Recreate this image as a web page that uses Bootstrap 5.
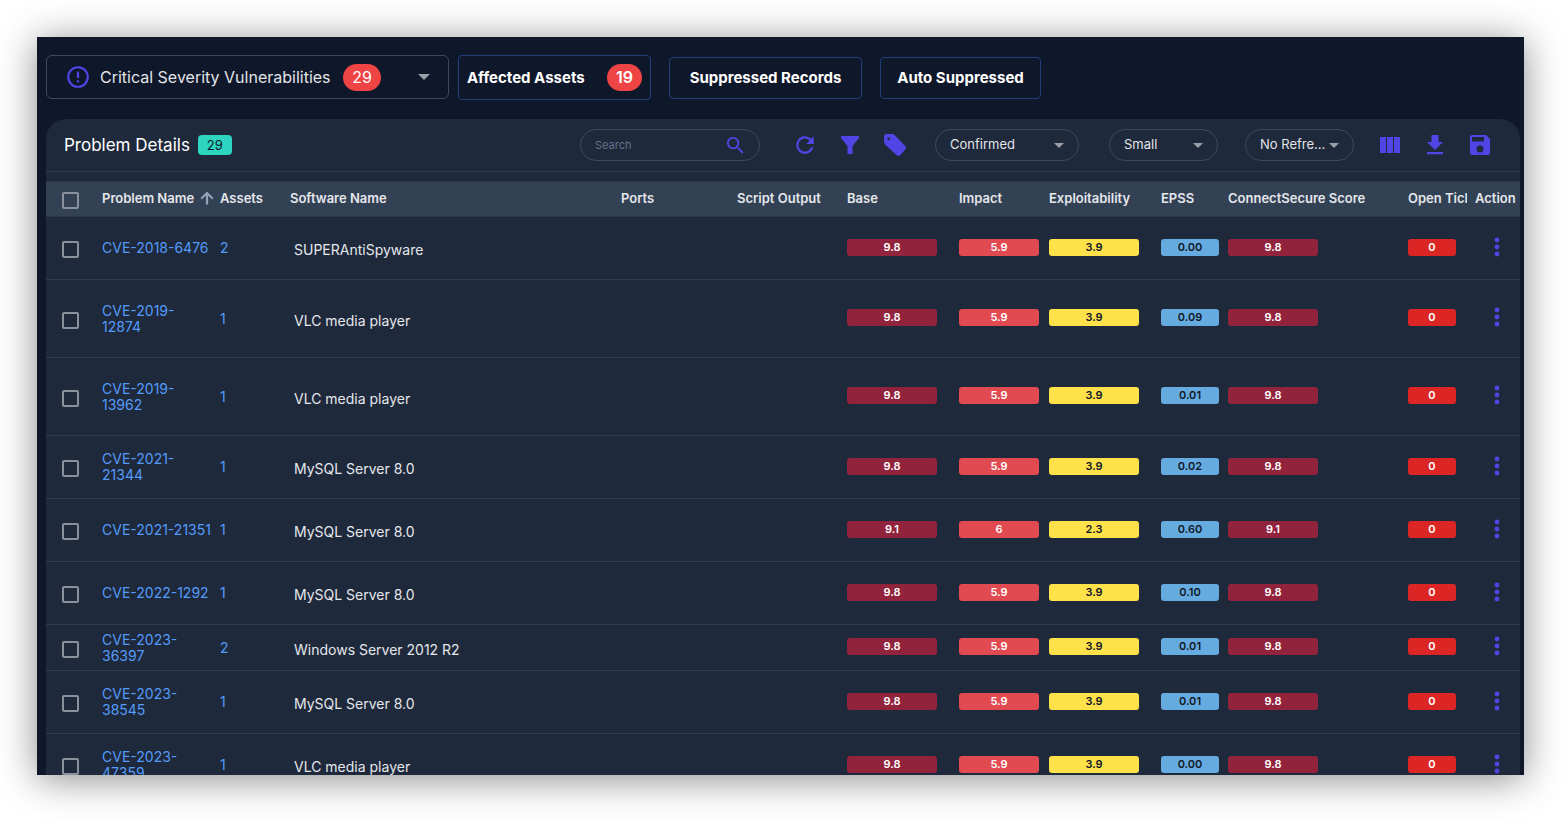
<!DOCTYPE html>
<html lang="en">
<head>
<meta charset="utf-8">
<meta name="viewport" content="width=device-width, initial-scale=1">
<title>Problem Details</title>
<link href="https://cdn.jsdelivr.net/npm/bootstrap@5.3.0/dist/css/bootstrap.min.css" rel="stylesheet">
<style>
  :root { --accent: #4f46e5; --ink: #0f172a; --panel: #1e293b; --line: #2d3b4e; --edge: #3c4a5e; }
  body { font-family: Inter, "Liberation Sans", sans-serif; background: #fff; height: 100vh; padding: 37px 44px 44px 37px; }
  .window { background: var(--ink); box-shadow: 0 4px 36px rgba(0,0,0,.46); padding: 18px 4px 0 9px; }
  svg { display: block; fill: currentColor; }
  select, .search-box input { appearance: none; background: transparent; border: 0; outline: 0; color: #e2e4e8; }
  select { background: url("data:image/svg+xml,%3Csvg xmlns='http://www.w3.org/2000/svg' viewBox='0 0 10 5'%3E%3Cpath d='M0 0h10L5 5z' fill='%239a9ea6'/%3E%3C/svg%3E") no-repeat right 14px center / 10px 5px; }
  option { background: var(--panel); }

  .severity { width: 403px; height: 44px; border: 1px solid var(--edge); border-radius: 6px; color: var(--accent); }
  .severity svg { left: 18px; pointer-events: none; }
  .severity select { font-size: 16px; padding-left: 53px; background-size: 12px 6px; background-position: right 18px center; }
  .count-pill { background: #ef4444; color: #fff; font-size: 16px; line-height: 27px; height: 27px; border-radius: 14px; text-align: center; }
  .severity .count-pill { width: 38px; left: 296px; top: 8px; pointer-events: none; }
  .tabs { margin-left: 9px; gap: 18px; }
  .tab-btn { --bs-btn-color: #fff; --bs-btn-border-color: #1e3f7a; --bs-btn-hover-color: #fff; --bs-btn-hover-border-color: #3b62a8; --bs-btn-border-radius: 4px;
    --bs-btn-font-size: 15px; --bs-btn-font-weight: 700; --bs-btn-line-height: 24px; height: 42px; }
  .tab-assets { width: 193px; height: 45px; padding: 0 8px; }
  .tab-assets .count-pill { width: 35px; }
  .tab-records { width: 193px; }
  .tab-auto { width: 161px; }

  .panel { background: var(--panel); border-radius: 20px 20px 0 0; margin-top: 19px; }
  .toolbar { height: 53px; padding: 0 28px 0 18px; border-bottom: 1px solid var(--line); margin-bottom: 9px; }
  .toolbar h1 { font-size: 17px; font-weight: 400; color: #fff; }
  .total { background: #2dd4bf; color: #0f172a; font-size: 13px; line-height: 20px; width: 34px; border-radius: 4px; text-align: center; }
  .search-box { width: 180px; height: 32px; border: 1px solid var(--edge); border-radius: 16px; padding: 0 14px; color: var(--accent); }
  .search-box input { font-size: 11px; }
  .search-box input::placeholder { color: #64748b; opacity: 1; }
  .pill-select { height: 32px; border: 1px solid var(--edge); border-radius: 16px; font-size: 13px; padding: 0 22px 0 14px; text-overflow: ellipsis; }
  .icon-btn { background: none; border: 0; padding: 0; color: var(--accent); }
  .tools { gap: 21px; }
  .quick { margin: 0 28px 0 33px; }
  .status { width: 144px; }
  .density { width: 109px; margin: 0 27px 0 30px; }
  .interval { width: 109px; }

  .grid { table-layout: fixed; width: 100%; }
  .grid col { width: 112px; }
  .grid th { background: #334155; color: #e5e7eb; font-size: 13px; font-weight: 600; height: 35px; line-height: 18px; padding: 0 0 2px; white-space: nowrap; border-top: 1px solid #2a384b; border-bottom: 1px solid #2a384b; }
  .grid td { height: 63px; padding: 0; vertical-align: middle; border-bottom: 1px solid var(--line); font-size: 14px; line-height: 16px; }
  .grid .roomy td { height: 78px; }
  .grid .tight td { height: 46px; }
  .grid .pick { padding: 3px 0 0 16px; }
  .grid .software { padding: 4px 0 0 4px; color: #e5e7eb; }
  .grid a { color: #559bfa; text-decoration: none; }
  .grid .pick input { appearance: none; display: block; width: 17px; height: 17px; border: 2px solid #8a919d; border-radius: 2px; }
  .grid .pick input:checked { background: var(--accent); }
  .sort-arrow { fill: #94a3b8; }
  .score { height: 17px; line-height: 16px; border-radius: 3px; font-size: 11px; font-weight: 600; text-align: center; color: #fff; margin-bottom: 2px; }
  .s-high { background: #92233d; width: 90px; }
  .s-impact { background: #e04a50; width: 80px; }
  .s-expl { background: #ffe14a; width: 90px; color: #111827; }
  .s-epss { background: #66abe0; width: 58px; color: #111827; }
  .s-open { background: #dc2626; width: 48px; }
  .more { width: 24px; margin-left: 18px; }
</style>
</head>
<body class="d-flex m-0 overflow-hidden">
<main class="window flex-fill overflow-hidden">
  <div class="d-flex">
    <div class="severity position-relative">
      <svg class="position-absolute top-50 translate-middle-y" width="26" height="26" viewBox="0 0 24 24" aria-hidden="true"><path d="M11 15h2v2h-2zm0-8h2v6h-2zm1-5a10 10 0 1 0 0 20 10 10 0 0 0 0-20zm0 18a8 8 0 1 1 0-16 8 8 0 0 1 0 16z"/></svg>
      <select class="w-100 h-100" aria-label="Severity"><option>Critical Severity Vulnerabilities</option></select>
      <span class="count-pill position-absolute">29</span>
    </div>
    <div class="tabs d-flex align-items-center">
      <button type="button" class="btn tab-btn tab-assets d-flex align-items-center justify-content-between">Affected Assets <span class="count-pill fw-semibold">19</span></button>
      <button type="button" class="btn tab-btn tab-records p-0">Suppressed Records</button>
      <button type="button" class="btn tab-btn tab-auto p-0">Auto Suppressed</button>
    </div>
  </div>

  <section class="panel overflow-hidden">
    <div class="toolbar d-flex align-items-center">
      <h1 class="m-0">Problem Details</h1>
      <span class="total ms-2">29</span>
      <label class="search-box d-flex align-items-center ms-auto">
        <input class="flex-fill w-100 p-0" type="text" placeholder="Search" aria-label="Search">
        <svg class="flex-shrink-0" width="20" height="20" viewBox="1 1 21 21" aria-hidden="true"><path d="M15.500 14h-.79l-.28-.27A6.470 6.470 0 0 0 16 9.500 6.500 6.500 0 1 0 9.500 16c1.610 0 3.090-.59 4.230-1.570l.27.28v.79l5 4.990L20.490 19l-4.990-5zm-6 0a4.500 4.500 0 1 1 0-9 4.500 4.500 0 0 1 0 9z"/></svg>
      </label>
      <div class="tools quick d-flex">
        <button class="icon-btn" type="button" aria-label="Refresh"><svg width="24" height="24" viewBox="1 1 22 22"><path d="M17.650 6.350A8 8 0 1 0 19.730 14h-2.080A6 6 0 1 1 12 6c1.660 0 3.140.69 4.220 1.780L13 11h7V4z"/></svg></button>
        <button class="icon-btn" type="button" aria-label="Filter"><svg width="24" height="24" viewBox="0 0 24 24"><path d="M3 3h18v2l-6.500 8v8h-5v-8L3 5z"/></svg></button>
        <button class="icon-btn" type="button" aria-label="Tag"><svg width="24" height="24" viewBox="0 0 24 24"><path fill-rule="evenodd" d="M3.500 1h5.500c1 0 1.900.4 2.600 1.100l10.500 10.700c1.100 1.100 1.200 2.500.2 3.600l-5 5.700c-1 1.100-2.500 1.100-3.600.1L2.500 12C1.500 11 1 9.900 1 8.600V3.500C1 2.100 2.100 1 3.500 1zm2.200 3.400a1.400 1.400 0 1 0 0 2.800 1.400 1.400 0 0 0 0-2.800z"/></svg></button>
      </div>
      <select class="pill-select status" aria-label="Status"><option>Confirmed</option></select>
      <select class="pill-select density" aria-label="Density"><option>Small</option></select>
      <select class="pill-select interval" aria-label="Refresh interval"><option>No Refre...</option></select>
      <div class="tools d-flex ms-4">
        <button class="icon-btn" type="button" aria-label="Columns"><svg width="24" height="24" viewBox="0 0 24 24"><path d="M2 4h6v16H2zm7 0h6v16H9zm7 0h6v16h-6z"/></svg></button>
        <button class="icon-btn" type="button" aria-label="Download"><svg width="24" height="24" viewBox="0 0 24 24"><path d="M20 9h-4.500V2h-7v7H4l8 8zM4 19v2.300h16V19z"/></svg></button>
        <button class="icon-btn" type="button" aria-label="Save"><svg width="24" height="24" viewBox="0 0 24 24"><path d="M18 2H4a2 2 0 0 0-2 2v16c0 1.100.9 2 2 2h16a2 2 0 0 0 2-2V6zm-6 17.500a3.500 3.500 0 1 1 0-7 3.500 3.500 0 0 1 0 7zM16 8.500H4V4h12z"/></svg></button>
      </div>
    </div>

    <table class="grid">
      <colgroup><col style="width:56px"><col style="width:118px"><col style="width:70px"><col style="width:auto"><col style="width:116px"><col style="width:110px"><col><col style="width:90px"><col><col style="width:67px"><col style="width:180px"><col style="width:59px"><col style="width:53px"></colgroup>
      <thead><tr>
        <th class="pick"><input type="checkbox" aria-label="Select all"></th>
        <th><span class="d-flex align-items-center">Problem Name
          <svg class="sort-arrow ms-1" width="18" height="18" viewBox="1 1 22 22" aria-hidden="true"><path d="M4 12l1.700 1.700L10.600 8.800V20h2.800V8.800l4.900 4.900L20 12l-8-8z"/></svg></span></th>
        <th>Assets</th><th>Software Name</th><th>Ports</th><th>Script Output</th><th>Base</th><th>Impact</th><th>Exploitability</th><th>EPSS</th><th>ConnectSecure Score</th><th class="overflow-hidden">Open Tick</th><th class="ps-2">Action</th>
      </tr></thead>
      <tbody id="problems"></tbody>
    </table>
  </section>
</main>

<script src="https://cdn.jsdelivr.net/npm/bootstrap@5.3.0/dist/js/bootstrap.bundle.min.js"></script>
<script>
  // name, assets, software, base, impact, exploitability, EPSS, row height class
  const problems = [
    ["CVE-2018-6476", 2, "SUPERAntiSpyware", "9.8", "5.9", "3.9", "0.00", ""],
    ["CVE-2019-12874", 1, "VLC media player", "9.8", "5.9", "3.9", "0.09", "roomy"],
    ["CVE-2019-13962", 1, "VLC media player", "9.8", "5.9", "3.9", "0.01", "roomy"],
    ["CVE-2021-21344", 1, "MySQL Server 8.0", "9.8", "5.9", "3.9", "0.02", ""],
    ["CVE-2021-21351", 1, "MySQL Server 8.0", "9.1", "6", "2.3", "0.60", ""],
    ["CVE-2022-1292", 1, "MySQL Server 8.0", "9.8", "5.9", "3.9", "0.10", ""],
    ["CVE-2023-36397", 2, "Windows Server 2012 R2", "9.8", "5.9", "3.9", "0.01", "tight"],
    ["CVE-2023-38545", 1, "MySQL Server 8.0", "9.8", "5.9", "3.9", "0.01", ""],
    ["CVE-2023-47359", 1, "VLC media player", "9.8", "5.9", "3.9", "0.00", ""]
  ];
  const score = (kind, value) => `<td><div class="score s-${kind}">${value}</div></td>`;
  document.getElementById("problems").innerHTML = problems.map(([name, assets, software, base, impact, expl, epss, size]) => `
    <tr class="${size}">
      <td class="pick"><input type="checkbox" aria-label="Select ${name}"></td>
      <td class="pe-2"><a href="#">${name}</a></td><td><a href="#">${assets}</a></td>
      <td class="software">${software}</td><td></td><td></td>
      ${score("high", base)}${score("impact", impact)}${score("expl", expl)}${score("epss", epss)}${score("high", base)}${score("open", 0)}
      <td><button class="icon-btn more" type="button" aria-label="Actions"><svg width="24" height="24" viewBox="0 0 24 24"><circle cx="12" cy="5" r="2.400"/><circle cx="12" cy="12" r="2.400"/><circle cx="12" cy="19" r="2.400"/></svg></button></td>
    </tr>`).join("");
</script>
</body>
</html>
